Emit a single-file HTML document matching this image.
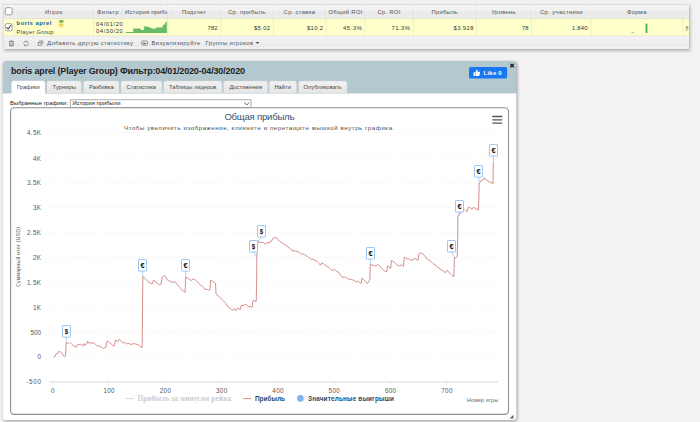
<!DOCTYPE html>
<html><head><meta charset="utf-8"><title>chart</title><style>
html,body{margin:0;padding:0}
body{width:700px;height:422px;overflow:hidden;background:#f2f2f2;position:relative}
svg text{font-family:"Liberation Sans",sans-serif}
.th{font-size:5.85px;fill:#555}
.td{font-size:5.85px;fill:#333}
.pn{font-size:5.9px;font-weight:bold;fill:#2258a0}
.pg{font-size:5.85px;fill:#444}
.ft{font-size:5.85px;fill:#555}
.ptitle{font-size:9px;font-weight:bold;fill:#222}
.tabt{font-size:5.75px;fill:#484848}
.like{font-size:5.9px;font-weight:bold;fill:#fff}
.sl{font-size:5.85px;fill:#222}
.ax{font-size:6.3px;fill:#585858}
.fl{font-size:7.2px;font-weight:bold;fill:#111}
.ttl{font-size:9.6px;fill:#2e5276}
.sub{font-size:6.15px;fill:#505050}
.yt{font-size:5.2px;fill:#555}
.xt{font-size:5.4px;fill:#666}
.lg1{font-family:"Liberation Serif",serif !important;font-weight:bold;font-size:7.2px;fill:#ccc}
.lg{font-weight:bold;font-size:6.4px;fill:#274b6d}
</style></head>
<body>
<svg width="700" height="422" viewBox="0 0 700 422" style="position:absolute;left:0;top:0">
<defs>
<filter id="sh" x="-5%" y="-20%" width="110%" height="150%"><feGaussianBlur stdDeviation="1.5"/></filter>
<filter id="sh2" x="-5%" y="-5%" width="110%" height="110%"><feGaussianBlur stdDeviation="1.6"/></filter>
<linearGradient id="gh" x1="0" y1="0" x2="0" y2="1"><stop offset="0" stop-color="#f6f6f6"/><stop offset="0.45" stop-color="#f0f0f0"/><stop offset="0.55" stop-color="#e8e8e8"/><stop offset="0.9" stop-color="#ececec"/><stop offset="1" stop-color="#f3f3f3"/></linearGradient>
<linearGradient id="gf" x1="0" y1="0" x2="0" y2="1"><stop offset="0" stop-color="#f3f3f3"/><stop offset="0.45" stop-color="#efefef"/><stop offset="0.8" stop-color="#eaeaea"/><stop offset="0.93" stop-color="#f4f4f4"/><stop offset="1" stop-color="#f6f6f6"/></linearGradient>
<linearGradient id="gt" x1="0" y1="0" x2="0" y2="1"><stop offset="0" stop-color="#f1f1f1"/><stop offset="1" stop-color="#e6e6e6"/></linearGradient>
</defs>
<rect x="4.2" y="5.9" width="686" height="44.9" fill="#000" opacity="0.27" filter="url(#sh)"/>
<rect x="3" y="4" width="686" height="14.600000000000001" fill="url(#gh)"/>
<rect x="3" y="18.6" width="686" height="17.299999999999997" fill="#ffffcc"/>
<rect x="3" y="35.9" width="686" height="13.0" fill="url(#gf)"/>
<line x1="3" x2="689" y1="4.4" y2="4.4" stroke="#d4d4d4" stroke-width="0.8"/>
<line x1="3.3" x2="3.3" y1="4" y2="48.9" stroke="#d0d0d0" stroke-width="0.6"/>
<line x1="3" x2="689" y1="36.25" y2="36.25" stroke="#e2e2e2" stroke-width="0.7"/>
<line x1="3" x2="689" y1="18.6" y2="18.6" stroke="#e0e0d0" stroke-width="0.5"/>
<line x1="14.4" x2="14.4" y1="4.8" y2="18.6" stroke="#d6d6d6" stroke-width="0.6"/>
<line x1="15.0" x2="15.0" y1="4.8" y2="18.6" stroke="#fafafa" stroke-width="0.5"/>
<line x1="14.4" x2="14.4" y1="18.6" y2="35.9" stroke="#e2e2c4" stroke-width="0.6"/>
<line x1="93.6" x2="93.6" y1="4.8" y2="18.6" stroke="#d6d6d6" stroke-width="0.6"/>
<line x1="94.19999999999999" x2="94.19999999999999" y1="4.8" y2="18.6" stroke="#fafafa" stroke-width="0.5"/>
<line x1="93.6" x2="93.6" y1="18.6" y2="35.9" stroke="#e2e2c4" stroke-width="0.6"/>
<line x1="123" x2="123" y1="4.8" y2="18.6" stroke="#d6d6d6" stroke-width="0.6"/>
<line x1="123.6" x2="123.6" y1="4.8" y2="18.6" stroke="#fafafa" stroke-width="0.5"/>
<line x1="123" x2="123" y1="18.6" y2="35.9" stroke="#e2e2c4" stroke-width="0.6"/>
<line x1="167.6" x2="167.6" y1="4.8" y2="18.6" stroke="#d6d6d6" stroke-width="0.6"/>
<line x1="168.2" x2="168.2" y1="4.8" y2="18.6" stroke="#fafafa" stroke-width="0.5"/>
<line x1="167.6" x2="167.6" y1="18.6" y2="35.9" stroke="#e2e2c4" stroke-width="0.6"/>
<line x1="221" x2="221" y1="4.8" y2="18.6" stroke="#d6d6d6" stroke-width="0.6"/>
<line x1="221.6" x2="221.6" y1="4.8" y2="18.6" stroke="#fafafa" stroke-width="0.5"/>
<line x1="221" x2="221" y1="18.6" y2="35.9" stroke="#e2e2c4" stroke-width="0.6"/>
<line x1="273.6" x2="273.6" y1="4.8" y2="18.6" stroke="#d6d6d6" stroke-width="0.6"/>
<line x1="274.20000000000005" x2="274.20000000000005" y1="4.8" y2="18.6" stroke="#fafafa" stroke-width="0.5"/>
<line x1="273.6" x2="273.6" y1="18.6" y2="35.9" stroke="#e2e2c4" stroke-width="0.6"/>
<line x1="326" x2="326" y1="4.8" y2="18.6" stroke="#d6d6d6" stroke-width="0.6"/>
<line x1="326.6" x2="326.6" y1="4.8" y2="18.6" stroke="#fafafa" stroke-width="0.5"/>
<line x1="326" x2="326" y1="18.6" y2="35.9" stroke="#e2e2c4" stroke-width="0.6"/>
<line x1="365" x2="365" y1="4.8" y2="18.6" stroke="#d6d6d6" stroke-width="0.6"/>
<line x1="365.6" x2="365.6" y1="4.8" y2="18.6" stroke="#fafafa" stroke-width="0.5"/>
<line x1="365" x2="365" y1="18.6" y2="35.9" stroke="#e2e2c4" stroke-width="0.6"/>
<line x1="413.6" x2="413.6" y1="4.8" y2="18.6" stroke="#d6d6d6" stroke-width="0.6"/>
<line x1="414.20000000000005" x2="414.20000000000005" y1="4.8" y2="18.6" stroke="#fafafa" stroke-width="0.5"/>
<line x1="413.6" x2="413.6" y1="18.6" y2="35.9" stroke="#e2e2c4" stroke-width="0.6"/>
<line x1="476.4" x2="476.4" y1="4.8" y2="18.6" stroke="#d6d6d6" stroke-width="0.6"/>
<line x1="477.0" x2="477.0" y1="4.8" y2="18.6" stroke="#fafafa" stroke-width="0.5"/>
<line x1="476.4" x2="476.4" y1="18.6" y2="35.9" stroke="#e2e2c4" stroke-width="0.6"/>
<line x1="531.6" x2="531.6" y1="4.8" y2="18.6" stroke="#d6d6d6" stroke-width="0.6"/>
<line x1="532.2" x2="532.2" y1="4.8" y2="18.6" stroke="#fafafa" stroke-width="0.5"/>
<line x1="531.6" x2="531.6" y1="18.6" y2="35.9" stroke="#e2e2c4" stroke-width="0.6"/>
<line x1="591" x2="591" y1="4.8" y2="18.6" stroke="#d6d6d6" stroke-width="0.6"/>
<line x1="591.6" x2="591.6" y1="4.8" y2="18.6" stroke="#fafafa" stroke-width="0.5"/>
<line x1="591" x2="591" y1="18.6" y2="35.9" stroke="#e2e2c4" stroke-width="0.6"/>
<line x1="683" x2="683" y1="4.8" y2="18.6" stroke="#d6d6d6" stroke-width="0.6"/>
<line x1="683.6" x2="683.6" y1="4.8" y2="18.6" stroke="#fafafa" stroke-width="0.5"/>
<line x1="683" x2="683" y1="18.6" y2="35.9" stroke="#e2e2c4" stroke-width="0.6"/>
<rect x="5.3" y="7.7" width="6.8" height="7.1" rx="1.4" fill="#fff" stroke="#858585" stroke-width="0.8"/>
<rect x="5.3" y="23.7" width="6.8" height="7.1" rx="1.4" fill="#fff" stroke="#858585" stroke-width="0.8"/>
<path d="M6.6 27.2 L8.2 29.2 L10.9 25.2" fill="none" stroke="#222" stroke-width="1"/>
<rect x="3.5999999999999996" y="62" width="513.6" height="359" rx="3" fill="#000" opacity="0.4" filter="url(#sh2)"/>
<path d="M2.8 94.5 V65 a4 4 0 0 1 4 -4 H512.4 a4 4 0 0 1 4 4 V94.5 H2.8 Z" fill="#b4c8d0"/>
<path d="M2.8 93.5 H516.4 V417.5 a2.5 2.5 0 0 1 -2.5 2.5 H5.3 a2.5 2.5 0 0 1 -2.5 -2.5 Z" fill="#fff"/>
<path d="M11.5 94.0 V83.39999999999999 a2.6 2.6 0 0 1 2.6 -2.6 H42.4 a2.6 2.6 0 0 1 2.6 2.6 V94.0 Z" fill="#fff"/>
<path d="M46.8 93 V83.4 a2.4 2.4 0 0 1 2.4 -2.4 H79.0 a2.4 2.4 0 0 1 2.4 2.4 V93 Z" fill="url(#gt)" stroke="#d4d8da" stroke-width="0.4"/>
<path d="M83.4 93 V83.4 a2.4 2.4 0 0 1 2.4 -2.4 H116.6 a2.4 2.4 0 0 1 2.4 2.4 V93 Z" fill="url(#gt)" stroke="#d4d8da" stroke-width="0.4"/>
<path d="M121 93 V83.4 a2.4 2.4 0 0 1 2.4 -2.4 H159.6 a2.4 2.4 0 0 1 2.4 2.4 V93 Z" fill="url(#gt)" stroke="#d4d8da" stroke-width="0.4"/>
<path d="M163.6 93 V83.4 a2.4 2.4 0 0 1 2.4 -2.4 H219.6 a2.4 2.4 0 0 1 2.4 2.4 V93 Z" fill="url(#gt)" stroke="#d4d8da" stroke-width="0.4"/>
<path d="M223.6 93 V83.4 a2.4 2.4 0 0 1 2.4 -2.4 H265.20000000000005 a2.4 2.4 0 0 1 2.4 2.4 V93 Z" fill="url(#gt)" stroke="#d4d8da" stroke-width="0.4"/>
<path d="M269.2 93 V83.4 a2.4 2.4 0 0 1 2.4 -2.4 H294.20000000000005 a2.4 2.4 0 0 1 2.4 2.4 V93 Z" fill="url(#gt)" stroke="#d4d8da" stroke-width="0.4"/>
<path d="M298.6 93 V83.4 a2.4 2.4 0 0 1 2.4 -2.4 H344.6 a2.4 2.4 0 0 1 2.4 2.4 V93 Z" fill="url(#gt)" stroke="#d4d8da" stroke-width="0.4"/>
<rect x="469" y="67.1" width="38.1" height="11.5" rx="1.6" fill="#1877f2"/>
<rect x="70.2" y="99.8" width="180.8" height="7.6" fill="#fff" stroke="#8a8a8a" stroke-width="0.7"/>
<rect x="10.6" y="107.8" width="497.9" height="306.6" rx="3.6" fill="#fff" stroke="#909090" stroke-width="1.1"/>
<line x1="49.2" x2="498" y1="132.50" y2="132.50" stroke="#e4e4e4" stroke-width="0.6" stroke-dasharray="0.7 1.4"/>
<line x1="49.2" x2="498" y1="158.20" y2="158.20" stroke="#e4e4e4" stroke-width="0.6" stroke-dasharray="0.7 1.4"/>
<line x1="49.2" x2="498" y1="182.60" y2="182.60" stroke="#e4e4e4" stroke-width="0.6" stroke-dasharray="0.7 1.4"/>
<line x1="49.2" x2="498" y1="207.40" y2="207.40" stroke="#e4e4e4" stroke-width="0.6" stroke-dasharray="0.7 1.4"/>
<line x1="49.2" x2="498" y1="232.60" y2="232.60" stroke="#e4e4e4" stroke-width="0.6" stroke-dasharray="0.7 1.4"/>
<line x1="49.2" x2="498" y1="257.50" y2="257.50" stroke="#e4e4e4" stroke-width="0.6" stroke-dasharray="0.7 1.4"/>
<line x1="49.2" x2="498" y1="282.30" y2="282.30" stroke="#e4e4e4" stroke-width="0.6" stroke-dasharray="0.7 1.4"/>
<line x1="49.2" x2="498" y1="307.20" y2="307.20" stroke="#e4e4e4" stroke-width="0.6" stroke-dasharray="0.7 1.4"/>
<line x1="49.2" x2="498" y1="332.00" y2="332.00" stroke="#e4e4e4" stroke-width="0.6" stroke-dasharray="0.7 1.4"/>
<line x1="49.2" x2="498" y1="356.60" y2="356.60" stroke="#e4e4e4" stroke-width="0.6" stroke-dasharray="0.7 1.4"/>
<line x1="49" x2="498" y1="381.9" y2="381.9" stroke="#d6d9dd" stroke-width="0.95"/>
<line x1="52.5" x2="52.5" y1="381.6" y2="384.6" stroke="#d0dae4" stroke-width="0.6"/>
<text x="50.9" y="392.7" textLength="3.6" lengthAdjust="spacing" class="ax" >0</text>
<line x1="108.8" x2="108.8" y1="381.6" y2="384.6" stroke="#d0dae4" stroke-width="0.6"/>
<text x="103.6" y="392.7" textLength="10.8" lengthAdjust="spacing" class="ax" >100</text>
<line x1="165.1" x2="165.1" y1="381.6" y2="384.6" stroke="#d0dae4" stroke-width="0.6"/>
<text x="159.7" y="392.7" textLength="11.2" lengthAdjust="spacing" class="ax" >200</text>
<line x1="221.4" x2="221.4" y1="381.6" y2="384.6" stroke="#d0dae4" stroke-width="0.6"/>
<text x="216.0" y="392.7" textLength="11.2" lengthAdjust="spacing" class="ax" >300</text>
<line x1="277.7" x2="277.7" y1="381.6" y2="384.6" stroke="#d0dae4" stroke-width="0.6"/>
<text x="272.3" y="392.7" textLength="11.2" lengthAdjust="spacing" class="ax" >400</text>
<line x1="334.0" x2="334.0" y1="381.6" y2="384.6" stroke="#d0dae4" stroke-width="0.6"/>
<text x="328.6" y="392.7" textLength="11.2" lengthAdjust="spacing" class="ax" >500</text>
<line x1="390.3" x2="390.3" y1="381.6" y2="384.6" stroke="#d0dae4" stroke-width="0.6"/>
<text x="384.9" y="392.7" textLength="11.2" lengthAdjust="spacing" class="ax" >600</text>
<line x1="446.6" x2="446.6" y1="381.6" y2="384.6" stroke="#d0dae4" stroke-width="0.6"/>
<text x="441.2" y="392.7" textLength="11.2" lengthAdjust="spacing" class="ax" >700</text>
<text x="27.0" y="135.0" textLength="14.0" lengthAdjust="spacing" class="ax" >4.5K</text>
<text x="33.0" y="160.7" textLength="8.0" lengthAdjust="spacing" class="ax" >4K</text>
<text x="27.0" y="185.1" textLength="14.0" lengthAdjust="spacing" class="ax" >3.5K</text>
<text x="33.0" y="209.9" textLength="8.0" lengthAdjust="spacing" class="ax" >3K</text>
<text x="27.0" y="235.1" textLength="14.0" lengthAdjust="spacing" class="ax" >2.5K</text>
<text x="33.0" y="260.0" textLength="8.0" lengthAdjust="spacing" class="ax" >2K</text>
<text x="27.0" y="284.8" textLength="14.0" lengthAdjust="spacing" class="ax" >1.5K</text>
<text x="33.0" y="309.7" textLength="8.0" lengthAdjust="spacing" class="ax" >1K</text>
<text x="30.6" y="334.5" textLength="10.4" lengthAdjust="spacing" class="ax" >500</text>
<text x="37.6" y="359.1" textLength="3.4" lengthAdjust="spacing" class="ax" >0</text>
<text x="26.2" y="384.1" textLength="14.8" lengthAdjust="spacing" class="ax" >-500</text>
<polyline points="53.5,357 55,356.5 56,354 57,353.2 57.5,353.8 58.5,351.5 59.5,352 60.5,351.8 61.5,352.5 62.5,354 63.5,356 64.5,356.8 65.5,356 66.2,342.5 67.5,343.2 68.5,343.5 69.5,342.5 70.5,343 72,344.5 73.5,345.8 75,346.5 76.2,347.5 77,345.2 78,344.5 79,344.8 80,344 81.5,344.8 83,345.8 83.8,343.5 84.8,345.5 86,344.2 87,343.5 87.7,341.2 88.5,343.2 89.5,342.5 90.8,343 92,343.5 93.2,342.5 94.5,343.5 96,344.8 97.5,346 98.5,345.5 99.5,346.5 100,345.8 101,347.2 102.5,348.2 103.5,348.5 104.5,347.8 105.8,347.5 107,341.2 108,341 109.5,342.5 110,343 111.5,344.2 113,345.5 114.2,346 115.5,340 116.5,340.5 117.8,341.8 119.5,339.2 120.5,340.2 121.5,341.5 122.5,342.8 124.5,342.5 125.5,343.2 126.5,344 128,343.2 129.5,343.8 131,344.5 133,343.8 135,343.8 137,344.2 138.5,345.2 140,346.2 141.5,347.5 142.2,347.2 142.6,300 142.9,276.5 145,278.5 147,280.5 149,282.2 151,283.5 152.2,284 153.5,280.2 155,281 156.5,282.5 158,284 159.5,284.8 160.8,284.5 162.5,276.5 163.5,276.2 164.5,275.5 165.5,277 167,279.5 168.5,280.5 170,281.2 172,282.2 173.5,282.5 174.8,281.5 176,283 177.5,284.8 179,286.5 180.5,288.2 182,290 183.5,291.2 185,292.5 185.8,277 187,277.8 188.5,278.8 190,279.8 191.5,280.5 192.8,279 194,279.2 195.5,280.2 197,281.5 198.5,283.2 200,284.5 201.5,285.5 203,286.8 204.5,289 206,289.5 207.5,289.5 208.8,290.2 210,289.2 210.6,280.5 211.5,280.5 213,281.5 214.5,282.5 215.5,283.5 216,293.5 217,295 218.5,296.2 220,297.5 221.5,299 223,300.5 224.5,302 226,303.5 227,306 228.5,307.2 230,308.5 231.5,309.5 232.8,310.2 234,309.2 234.8,309 235.8,310.5 236.8,308.8 238.2,308 239.2,309.2 240.2,309.8 241,305.8 242,305.2 243.2,306 244.5,304.2 245.5,304 246.5,305.2 247.8,306.2 249,306.5 250,306.2 251.5,307.5 252.2,307 252.8,301 254,300 255,301.2 256.2,301.5 256.7,280 256.8,257 257.2,248 258,241.5 259.5,242 261,242.8 262,242.2 263.5,242.8 265,244 266.5,243.8 267.8,242 269,243.2 270.5,241 271.5,241.2 272.8,238.5 274,238 275.5,237.5 276.5,237.8 278,239.8 280,241.5 282,243 284,244.2 286,245.5 288,247 290,248.5 292,250 293.5,251.5 294.2,250.2 295.5,251.2 297,251.5 298.5,252 300,253.2 301.5,254.5 303,253.8 304.5,254.5 306,255.5 307.5,256.5 309,257.8 310.5,258.8 312,259.5 313.5,259.5 315,260.2 317,261.5 319,263.5 320.5,265.2 321.8,262.8 323.5,263.8 325,265 327,266.5 329,267.5 331,269.5 332.5,270.5 334,269.5 335.5,270.2 337,271.5 338.5,272 340,274.5 341.5,276.5 343,277.5 344.5,277 346,277.5 347.5,278.5 349,279.5 350.5,279 352,279.8 353.5,280.2 355,281.2 356.5,282 357.8,280.8 359,282 360.5,283.2 361.2,283.2 361.8,278.2 363,279.2 364.5,280.5 366,282 367.5,283.5 368.5,282 369.8,279.8 370.3,264.5 371.5,264.8 373,265.2 374.5,265.8 376,266 377.5,264.5 379,265.5 380,266.5 381.5,267.8 383,269.5 384.5,271 386,271.8 386.8,271.5 387.5,266 388.8,266.5 390,268 390.8,268.2 391.4,260.5 392.5,260.8 394,262 395.5,263.2 397,264.8 398,265.8 399.5,265.5 401,265 402.5,265.5 403.5,266.5 404.2,257.2 405.5,257.8 407,259.2 408.2,258.5 409.5,259.5 411,260.2 412.5,259.8 414,259.2 415.5,258.5 416.8,259.8 418,260.2 418.8,254 420,253 421.5,253.2 423,254.2 424.5,255.5 425.8,257.5 427,259.2 428.5,260.2 430,260.5 431.5,262 433,263.5 435,265 437,266.5 439,268 440,269 442,270 444,271.8 445.5,272.8 447,270.2 448.5,271.8 450,273.2 451.5,274.8 453,276.2 453.8,276.8 454.5,258 456,257.5 457.2,256.5 457.7,240 457.8,217.2 459,214.5 461,212.6 463,210.8 464.5,209.5 465.5,210.5 467,211.8 468.2,207.5 469.5,207.2 470.8,208.5 472,209.2 473.5,207.2 474.8,208 476,209 477.5,209.5 478.5,210 479.2,183 480.5,182 481.5,180 482.5,180.5 484,178 485,178.2 486.2,180 487.5,180.5 489,181.5 490.5,182.5 492,183 493,183.5 493.3,161.5" fill="none" stroke="#c97272" stroke-width="0.8" stroke-linejoin="round"/>
<line x1="66.5" y1="337.1" x2="66.2" y2="342.5" stroke="#7cb5ec" stroke-width="0.6"/>
<rect x="62.5" y="325.5" width="8.0" height="11.6" rx="0.6" fill="#fff" stroke="#8cbdf0" stroke-width="0.85"/>
<text transform="translate(66.5,333.8) scale(0.85,1.08)" text-anchor="middle" class="fl">$</text>
<line x1="142.5" y1="271.1" x2="143" y2="276.5" stroke="#7cb5ec" stroke-width="0.6"/>
<rect x="138.5" y="259.5" width="8.0" height="11.6" rx="0.6" fill="#fff" stroke="#8cbdf0" stroke-width="0.85"/>
<text transform="translate(142.5,267.8) scale(1.05,0.95)" text-anchor="middle" class="fl">€</text>
<line x1="185.5" y1="271.1" x2="185.8" y2="277" stroke="#7cb5ec" stroke-width="0.6"/>
<rect x="181.5" y="259.5" width="8.0" height="11.6" rx="0.6" fill="#fff" stroke="#8cbdf0" stroke-width="0.85"/>
<text transform="translate(185.5,267.8) scale(1.05,0.95)" text-anchor="middle" class="fl">€</text>
<line x1="253.5" y1="252.1" x2="256.5" y2="256.8" stroke="#7cb5ec" stroke-width="0.6"/>
<rect x="249.5" y="240.5" width="8.0" height="11.6" rx="0.6" fill="#fff" stroke="#8cbdf0" stroke-width="0.85"/>
<text transform="translate(253.5,248.8) scale(0.85,1.08)" text-anchor="middle" class="fl">$</text>
<line x1="261.5" y1="237.1" x2="258" y2="241.5" stroke="#7cb5ec" stroke-width="0.6"/>
<rect x="257.5" y="225.5" width="8.0" height="11.6" rx="0.6" fill="#fff" stroke="#8cbdf0" stroke-width="0.85"/>
<text transform="translate(261.5,233.8) scale(0.85,1.08)" text-anchor="middle" class="fl">$</text>
<line x1="370.5" y1="259.1" x2="370.3" y2="264.5" stroke="#7cb5ec" stroke-width="0.6"/>
<rect x="366.5" y="247.5" width="8.0" height="11.6" rx="0.6" fill="#fff" stroke="#8cbdf0" stroke-width="0.85"/>
<text transform="translate(370.5,255.8) scale(1.05,0.95)" text-anchor="middle" class="fl">€</text>
<line x1="451.5" y1="252.1" x2="454.5" y2="258" stroke="#7cb5ec" stroke-width="0.6"/>
<rect x="447.5" y="240.5" width="8.0" height="11.6" rx="0.6" fill="#fff" stroke="#8cbdf0" stroke-width="0.85"/>
<text transform="translate(451.5,248.8) scale(1.05,0.95)" text-anchor="middle" class="fl">€</text>
<line x1="459.5" y1="212.1" x2="457.8" y2="217.2" stroke="#7cb5ec" stroke-width="0.6"/>
<rect x="455.5" y="200.5" width="8.0" height="11.6" rx="0.6" fill="#fff" stroke="#8cbdf0" stroke-width="0.85"/>
<text transform="translate(459.5,208.8) scale(1.05,0.95)" text-anchor="middle" class="fl">€</text>
<line x1="478.5" y1="177.1" x2="479.2" y2="182.5" stroke="#7cb5ec" stroke-width="0.6"/>
<rect x="474.5" y="165.5" width="8.0" height="11.6" rx="0.6" fill="#fff" stroke="#8cbdf0" stroke-width="0.85"/>
<text transform="translate(478.5,173.8) scale(1.05,0.95)" text-anchor="middle" class="fl">€</text>
<line x1="493.5" y1="156.1" x2="493.3" y2="161.5" stroke="#7cb5ec" stroke-width="0.6"/>
<rect x="489.5" y="144.5" width="8.0" height="11.6" rx="0.6" fill="#fff" stroke="#8cbdf0" stroke-width="0.85"/>
<text transform="translate(493.5,152.8) scale(1.05,0.95)" text-anchor="middle" class="fl">€</text>
<text x="224.4" y="119.6" textLength="70.0" lengthAdjust="spacing" class="ttl" >Общая прибыль</text>
<text x="124.0" y="129.7" textLength="270.4" lengthAdjust="spacing" class="sub" >Чтобы увеличить изображение, кликните и перетащите мышкой внутрь графика.</text>
<g transform="translate(20.3,257) rotate(-90)"><text x="-30.0" y="0.0" textLength="60.0" lengthAdjust="spacing" class="yt" >Суммарный итог (USD)</text></g>
<text x="467.0" y="401.6" textLength="31.0" lengthAdjust="spacing" class="xt" >Номер игры</text>
<line x1="492.8" x2="501.8" y1="116.5" y2="116.5" stroke="#555" stroke-width="1.3" stroke-linecap="round"/>
<line x1="492.8" x2="501.8" y1="119.8" y2="119.8" stroke="#555" stroke-width="1.3" stroke-linecap="round"/>
<line x1="492.8" x2="501.8" y1="123.1" y2="123.1" stroke="#555" stroke-width="1.3" stroke-linecap="round"/>
<line x1="125.6" x2="133.6" y1="398.6" y2="398.6" stroke="#ccc" stroke-width="0.8"/>
<text x="137.4" y="401.0" textLength="93.6" lengthAdjust="spacing" class="lg1" >Прибыль за минусом рейка</text>
<line x1="243" x2="251" y1="398.6" y2="398.6" stroke="#c97272" stroke-width="0.8"/>
<text x="255.0" y="401.0" textLength="30.0" lengthAdjust="spacing" class="lg" >Прибыль</text>
<circle cx="300.4" cy="398.4" r="3.3" fill="#7cb5ec"/>
<text x="308.0" y="401.0" textLength="86.0" lengthAdjust="spacing" class="lg" >Значительные выигрыши</text>
<path d="M513.5 414.7 L513.5 418.6 L509.4 418.6 Z" fill="#666"/>
<g transform="translate(57.8,20.6)"><rect x="1.4" y="-0.4" width="4.2" height="2.4" fill="#6db040"/><path d="M3.5 1.6 L4.3 3.4 L6.3 3.6 L4.8 4.9 L5.3 6.9 L3.5 5.8 L1.7 6.9 L2.2 4.9 L0.7 3.6 L2.7 3.4 Z" fill="#f2d466" stroke="#e6c050" stroke-width="0.3"/></g>
<polygon points="125.7,33.1 125.7,32.1 133.2,32.1 133.2,28.5 140.4,28.6 141,29.9 143.7,29.9 143.9,26.4 147.1,26.4 150,27.4 152.9,28.7 154.5,28.8 157.1,27.4 160.7,27.3 162.5,27.8 162.9,24.9 164.6,24.4 165.4,22.8 166.4,21.4 166.8,21.2 166.8,33.1" fill="#68bc68"/>
<rect x="645.6" y="23.6" width="1.8" height="9.4" fill="#4cae4c"/><rect x="631.4" y="31.8" width="2.4" height="1.4" fill="#8fe08f"/>
<g fill="none" stroke="#777"><path d="M9 41.6 h5 M9.8 42.4 v3.6 h3.4 v-3.6 M10.7 40.8 h1.6" stroke-width="0.9"/><path d="M10.9 42.8 v2.6 M12.1 42.8 v2.6" stroke-width="0.5"/><path d="M23.6 43.6 a2.4 2.4 0 0 1 4 -1.8 M28.4 43.2 a2.4 2.4 0 0 1 -4 1.8" stroke="#888" stroke-width="0.8"/><path d="M27 40.6 l1.2 1.6 l-2 0.3z M25 46.4 l-1.2 -1.6 l2 -0.3z" fill="#888" stroke="none"/><rect x="38.2" y="42.4" width="3" height="2.8" stroke-width="0.7"/><path d="M39.6 41.8 v-0.9 h3.2 v2.9 h-0.9" stroke-width="0.7"/></g>
<g transform="translate(141.2,40.5)"><rect x="0.4" y="0.4" width="6" height="4.3" rx="0.9" fill="#dcdcdc" stroke="#8a8a8a" stroke-width="0.8"/><path d="M1.6 3.4 L2.6 2.2 L3.4 2.8 L4.6 2.4 L4.6 3.6 L1.6 3.6Z" fill="#555"/></g>
<g transform="translate(473,69) scale(0.47)"><path d="M1 7 h3 v8 h-3z M5 7.2 L8 1.2 c1.6 0 2.2 1.4 1.7 3 L9.3 6 h4.2 c1.2 0 1.8 1 1.5 2 l-1.4 5.6 c-.3 1-1 1.4-2 1.4 H5z" fill="#fff"/></g>
<path d="M510.4 63.9 L513.8 67.3 M513.8 63.9 L510.4 67.3" stroke="#111" stroke-width="1.3"/>
<path d="M244.4 102.4 L246.8 105 L249.2 102.4" fill="none" stroke="#444" stroke-width="0.8"/>
<defs><clipPath id="c1"><rect x="93.6" y="15" width="29.1" height="22"/></clipPath><clipPath id="c2"><rect x="123" y="4" width="44.2" height="14"/></clipPath></defs>
<text x="45.0" y="13.6" textLength="17.4" lengthAdjust="spacing" class="th" >Игрок</text>
<text x="97.0" y="13.6" textLength="21.4" lengthAdjust="spacing" class="th" >Фильтр</text>
<text x="182.0" y="13.6" textLength="24.0" lengthAdjust="spacing" class="th" >Подсчет</text>
<text x="228.0" y="13.6" textLength="37.6" lengthAdjust="spacing" class="th" >Ср. прибыль</text>
<text x="283.6" y="13.6" textLength="31.4" lengthAdjust="spacing" class="th" >Ср. ставка</text>
<text x="328.4" y="13.6" textLength="34.0" lengthAdjust="spacing" class="th" >Общий ROI</text>
<text x="377.6" y="13.6" textLength="22.8" lengthAdjust="spacing" class="th" >Ср. ROI</text>
<text x="431.6" y="13.6" textLength="26.0" lengthAdjust="spacing" class="th" >Прибыль</text>
<text x="491.4" y="13.6" textLength="24.2" lengthAdjust="spacing" class="th" >Уровень</text>
<text x="540.0" y="13.6" textLength="42.4" lengthAdjust="spacing" class="th" >Ср. участники</text>
<text x="627.0" y="13.6" textLength="19.4" lengthAdjust="spacing" class="th" >Форма</text>
<text x="125.0" y="13.6" textLength="51.5" lengthAdjust="spacing" class="th" clip-path="url(#c2)">История прибыли</text>
<text x="207.6" y="29.5" textLength="10.0" lengthAdjust="spacing" class="td" >782</text>
<text x="254.0" y="29.5" textLength="16.0" lengthAdjust="spacing" class="td" >$5.02</text>
<text x="307.0" y="29.5" textLength="16.0" lengthAdjust="spacing" class="td" >$10.2</text>
<text x="343.0" y="29.5" textLength="19.0" lengthAdjust="spacing" class="td" >45.3%</text>
<text x="391.6" y="29.5" textLength="18.4" lengthAdjust="spacing" class="td" >71.3%</text>
<text x="453.6" y="29.5" textLength="19.8" lengthAdjust="spacing" class="td" >$3.928</text>
<text x="522.0" y="29.5" textLength="6.4" lengthAdjust="spacing" class="td" >78</text>
<text x="572.0" y="29.5" textLength="15.6" lengthAdjust="spacing" class="td" >1.840</text>
<text x="16.6" y="24.9" textLength="34.8" lengthAdjust="spacing" class="pn" >boris aprel</text>
<text x="16.6" y="33.6" textLength="37.0" lengthAdjust="spacing" class="pg" >Player Group</text>
<g clip-path="url(#c1)"><text x="96.0" y="26.2" textLength="34.4" lengthAdjust="spacing" class="td" >04/01/2020</text><text x="96.0" y="32.8" textLength="34.4" lengthAdjust="spacing" class="td" >04/30/2020</text></g>
<text x="47.0" y="44.5" textLength="86.0" lengthAdjust="spacing" class="ft" >Добавить другую статистику</text>
<text x="151.6" y="44.5" textLength="48.4" lengthAdjust="spacing" class="ft" >Визуализируйте</text>
<text x="205.6" y="44.5" textLength="47.4" lengthAdjust="spacing" class="ft" >Группы игроков</text>
<path d="M255.5 41.9 h4 l-2 2.2z" fill="#555"/>
<text x="685.6" y="29.4" textLength="2.4" lengthAdjust="spacing" class="td" >x</text>
<line x1="685.4" x2="688.2" y1="30.3" y2="30.3" stroke="#444" stroke-width="0.4"/>
<text x="11.0" y="74.0" textLength="234.0" lengthAdjust="spacing" class="ptitle" >boris aprel (Player Group) Фильтр:04/01/2020-04/30/2020</text>
<text x="17.0" y="89.0" textLength="22.6" lengthAdjust="spacing" class="tabt" >Графики</text>
<text x="52.6" y="89.0" textLength="23.4" lengthAdjust="spacing" class="tabt" >Турниры</text>
<text x="89.0" y="89.0" textLength="24.6" lengthAdjust="spacing" class="tabt" >Разбивка</text>
<text x="126.6" y="89.0" textLength="29.4" lengthAdjust="spacing" class="tabt" >Статистика</text>
<text x="169.0" y="89.0" textLength="47.4" lengthAdjust="spacing" class="tabt" >Таблицы лидеров</text>
<text x="229.4" y="89.0" textLength="32.6" lengthAdjust="spacing" class="tabt" >Достижения</text>
<text x="274.4" y="89.0" textLength="16.6" lengthAdjust="spacing" class="tabt" >Найти</text>
<text x="303.6" y="89.0" textLength="38.0" lengthAdjust="spacing" class="tabt" >Опубликовать</text>
<text x="483.6" y="74.9" textLength="18.0" lengthAdjust="spacing" class="like" >Like 0</text>
<text x="10.0" y="105.2" textLength="58.0" lengthAdjust="spacing" class="sl" >Выбранные графики:</text>
<text x="72.4" y="105.2" textLength="48.0" lengthAdjust="spacing" class="sl" >История прибыли</text>
</svg>
</body></html>
